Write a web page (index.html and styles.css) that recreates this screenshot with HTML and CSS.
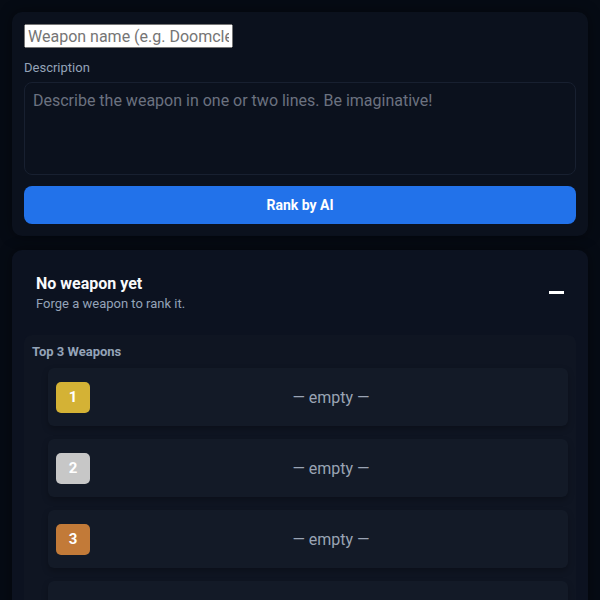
FILE: index.html
```html
<!DOCTYPE html>
<html lang="en">
<head>
    <meta charset="UTF-8">
    <meta name="viewport" content="width=device-width, initial-scale=1.0">
    <title>Weapon Forge</title>
    <link rel="stylesheet" href="styles.css">
</head>
<body>
    <div class="page">
        <div class="card forge">
            <input type="text" class="name-input" placeholder="Weapon name (e.g. Doomcleaver)">
            <label class="field-label" for="desc">Description</label>
            <textarea id="desc" class="desc-input" placeholder="Describe the weapon in one or two lines. Be imaginative!"></textarea>
            <button class="rank-button">Rank by AI</button>
        </div>

        <div class="card result">
            <div class="result-head">
                <div>
                    <h2 class="result-title">No weapon yet</h2>
                    <p class="result-sub">Forge a weapon to rank it.</p>
                </div>
                <button class="collapse" aria-label="Collapse"><span></span></button>
            </div>

            <div class="board">
                <h3 class="board-title">Top 3 Weapons</h3>
                <ol class="rank-list">
                    <li class="rank-row">
                        <span class="badge gold">1</span>
                        <span class="rank-name">— empty —</span>
                    </li>
                    <li class="rank-row">
                        <span class="badge silver">2</span>
                        <span class="rank-name">— empty —</span>
                    </li>
                    <li class="rank-row">
                        <span class="badge bronze">3</span>
                        <span class="rank-name">— empty —</span>
                    </li>
                    <li class="rank-row"></li>
                </ol>
            </div>
        </div>
    </div>
</body>
</html>
```

FILE: styles.css
```css
/* Reset */
* {
  box-sizing: border-box;
  margin: 0;
  padding: 0;
}

body {
  font-family: Roboto, "Liberation Sans", sans-serif;
  background-color: #060b14;
  color: #f1f5f9;
}

.page {
  padding: 12px;
  display: flex;
  flex-direction: column;
  gap: 14px;
}

/* Cards */
.card {
  background-color: #0b111d;
  border-radius: 10px;
  padding: 12px;
  box-shadow: 0 0 14px rgba(0, 0, 0, 0.45);
}

.forge {
  display: flex;
  flex-direction: column;
  align-items: flex-start;
}

/* The name field keeps the browser look */
.name-input {
  font-family: inherit;
  font-size: 16px;
  width: 209px;
  height: 24px;
  padding: 1px 2px;
}

.field-label {
  margin-top: 12px;
  margin-bottom: 7px;
  font-size: 13px;
  color: #94a3b8;
}

.desc-input {
  width: 100%;
  height: 93px;
  resize: none;
  background-color: #0b111d;
  border: 1px solid #182030;
  border-radius: 8px;
  padding: 8px 8px;
  font-family: inherit;
  font-size: 16px;
  color: #e2e8f0;
}

.desc-input::placeholder {
  color: #6b7280;
}

.rank-button {
  margin-top: 11px;
  width: 100%;
  height: 38px;
  border: none;
  border-radius: 8px;
  background-color: #2272ea;
  color: #fff;
  font-family: inherit;
  font-size: 14px;
  font-weight: 700;
  cursor: pointer;
}

/* Result card */
.result {
  background-color: #0c1220;
  min-height: 400px;
}

.result-head {
  display: flex;
  align-items: center;
  justify-content: space-between;
  padding: 12px 12px 24px;
}

.result-title {
  font-size: 16px;
  font-weight: 700;
  color: #f8fafc;
  line-height: 20px;
}

.result-sub {
  margin-top: 2px;
  font-size: 13px;
  color: #94a3b8;
}

.collapse {
  background: none;
  border: none;
  width: 15px;
  height: 15px;
  display: flex;
  align-items: center;
  cursor: pointer;
}

.collapse span {
  display: block;
  width: 15px;
  height: 3px;
  background-color: #fff;
}

/* Top list */
.board {
  background-color: #0f1522;
  border-radius: 8px;
  padding: 9px 8px 8px;
}

.board-title {
  font-size: 13px;
  font-weight: 700;
  color: #94a3b8;
  line-height: 16px;
  margin-bottom: 8px;
}

.rank-list {
  list-style: none;
  margin-left: 16px;
  display: flex;
  flex-direction: column;
  gap: 13px;
}

.rank-row {
  display: flex;
  align-items: center;
  gap: 12px;
  height: 58px;
  padding: 0 8px;
  background-color: #131a27;
  border-radius: 6px;
  box-shadow: 0 3px 6px rgba(0, 0, 0, 0.25);
}

.badge {
  width: 34px;
  height: 31px;
  border-radius: 5px;
  display: flex;
  align-items: center;
  justify-content: center;
  color: #fff;
  font-size: 15px;
  font-weight: 700;
}

.gold { background-color: #d4b235; }
.silver { background-color: #c7c7c7; }
.bronze { background-color: #c27a38; }

.rank-name {
  flex: 1;
  text-align: center;
  font-size: 16px;
  color: #9aa4b4;
}
```
